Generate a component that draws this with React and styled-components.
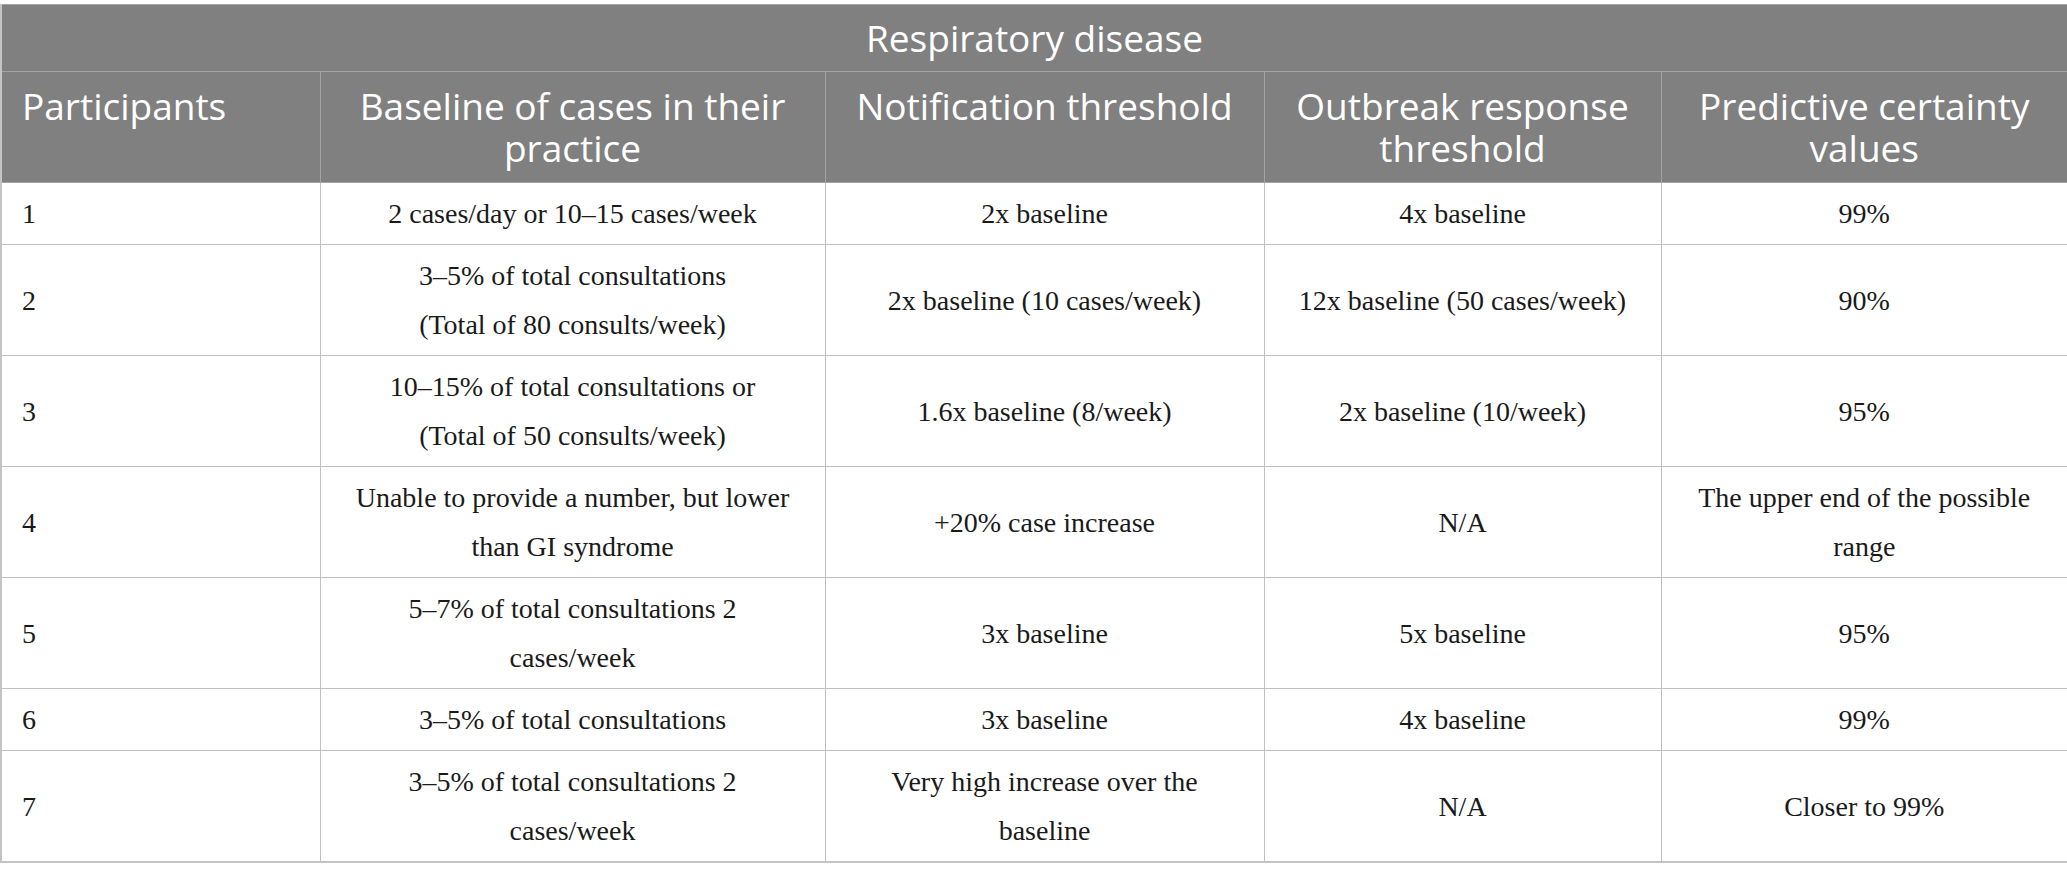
import React from 'react';
import styled, { createGlobalStyle } from 'styled-components';

const GlobalStyle = createGlobalStyle`
  html, body {
    margin: 0;
    padding: 0;
    background: #ffffff;
  }
`;

const Page = styled.div`
  padding-top: 4px;
  background: #ffffff;
`;

const Table = styled.table`
  width: 100%;
  table-layout: fixed;
  border-collapse: collapse;
  border: 2px solid #c4c4c4;
  border-top-width: 1px;
`;

const TitleCell = styled.th`
  background: #7f807f;
  color: #ffffff;
  font-family: 'Open Sans', 'Noto Sans', sans-serif;
  font-weight: 400;
  font-size: 37px;
  line-height: 42px;
  padding: 12px 20px;
  text-align: center;
  border: 1px solid #a3a3a3;
`;

const HeadCell = styled.th`
  background: #7f807f;
  color: #ffffff;
  font-family: 'Open Sans', 'Noto Sans', sans-serif;
  font-weight: 400;
  font-size: 37px;
  line-height: 42px;
  padding: 13px 20px 13px;
  vertical-align: top;
  text-align: ${(p) => (p.left ? 'left' : 'center')};
  border: 1px solid #a3a3a3;
`;

const Cell = styled.td`
  color: #1a1a1a;
  font-family: 'Liberation Serif', 'Times New Roman', serif;
  font-size: 28px;
  line-height: 49px;
  padding: 6px 20px;
  vertical-align: middle;
  text-align: ${(p) => (p.left ? 'left' : 'center')};
  border: 1px solid #c0c0c0;
`;

const columns = [
  { width: 319, label: ['Participants'], left: true },
  { width: 505, label: ['Baseline of cases in their', 'practice'] },
  { width: 439, label: ['Notification threshold'] },
  { width: 397, label: ['Outbreak response', 'threshold'] },
  { width: 407, label: ['Predictive certainty', 'values'] },
];

const rows = [
  [['1'], ['2 cases/day or 10–15 cases/week'], ['2x baseline'], ['4x baseline'], ['99%']],
  [
    ['2'],
    ['3–5% of total consultations', '(Total of 80 consults/week)'],
    ['2x baseline (10 cases/week)'],
    ['12x baseline (50 cases/week)'],
    ['90%'],
  ],
  [
    ['3'],
    ['10–15% of total consultations or', '(Total of 50 consults/week)'],
    ['1.6x baseline (8/week)'],
    ['2x baseline (10/week)'],
    ['95%'],
  ],
  [
    ['4'],
    ['Unable to provide a number, but lower', 'than GI syndrome'],
    ['+20% case increase'],
    ['N/A'],
    ['The upper end of the possible', 'range'],
  ],
  [['5'], ['5–7% of total consultations 2', 'cases/week'], ['3x baseline'], ['5x baseline'], ['95%']],
  [['6'], ['3–5% of total consultations'], ['3x baseline'], ['4x baseline'], ['99%']],
  [
    ['7'],
    ['3–5% of total consultations 2', 'cases/week'],
    ['Very high increase over the', 'baseline'],
    ['N/A'],
    ['Closer to 99%'],
  ],
];

const Lines = ({ lines }) =>
  lines.map((line, i) => (
    <React.Fragment key={i}>
      {i > 0 && <br />}
      {line}
    </React.Fragment>
  ));

const App = () => (
  <Page>
    <GlobalStyle />
    <Table>
      <colgroup>
        {columns.map((c) => (
          <col key={c.width} style={{ width: c.width }} />
        ))}
      </colgroup>
      <thead>
        <tr>
          <TitleCell colSpan={5}>Respiratory disease</TitleCell>
        </tr>
        <tr>
          {columns.map((c, i) => (
            <HeadCell key={i} left={c.left}>
              <Lines lines={c.label} />
            </HeadCell>
          ))}
        </tr>
      </thead>
      <tbody>
        {rows.map((row, r) => (
          <tr key={r}>
            {row.map((cell, i) => (
              <Cell key={i} left={i === 0}>
                <Lines lines={cell} />
              </Cell>
            ))}
          </tr>
        ))}
      </tbody>
    </Table>
  </Page>
);

export default App;
